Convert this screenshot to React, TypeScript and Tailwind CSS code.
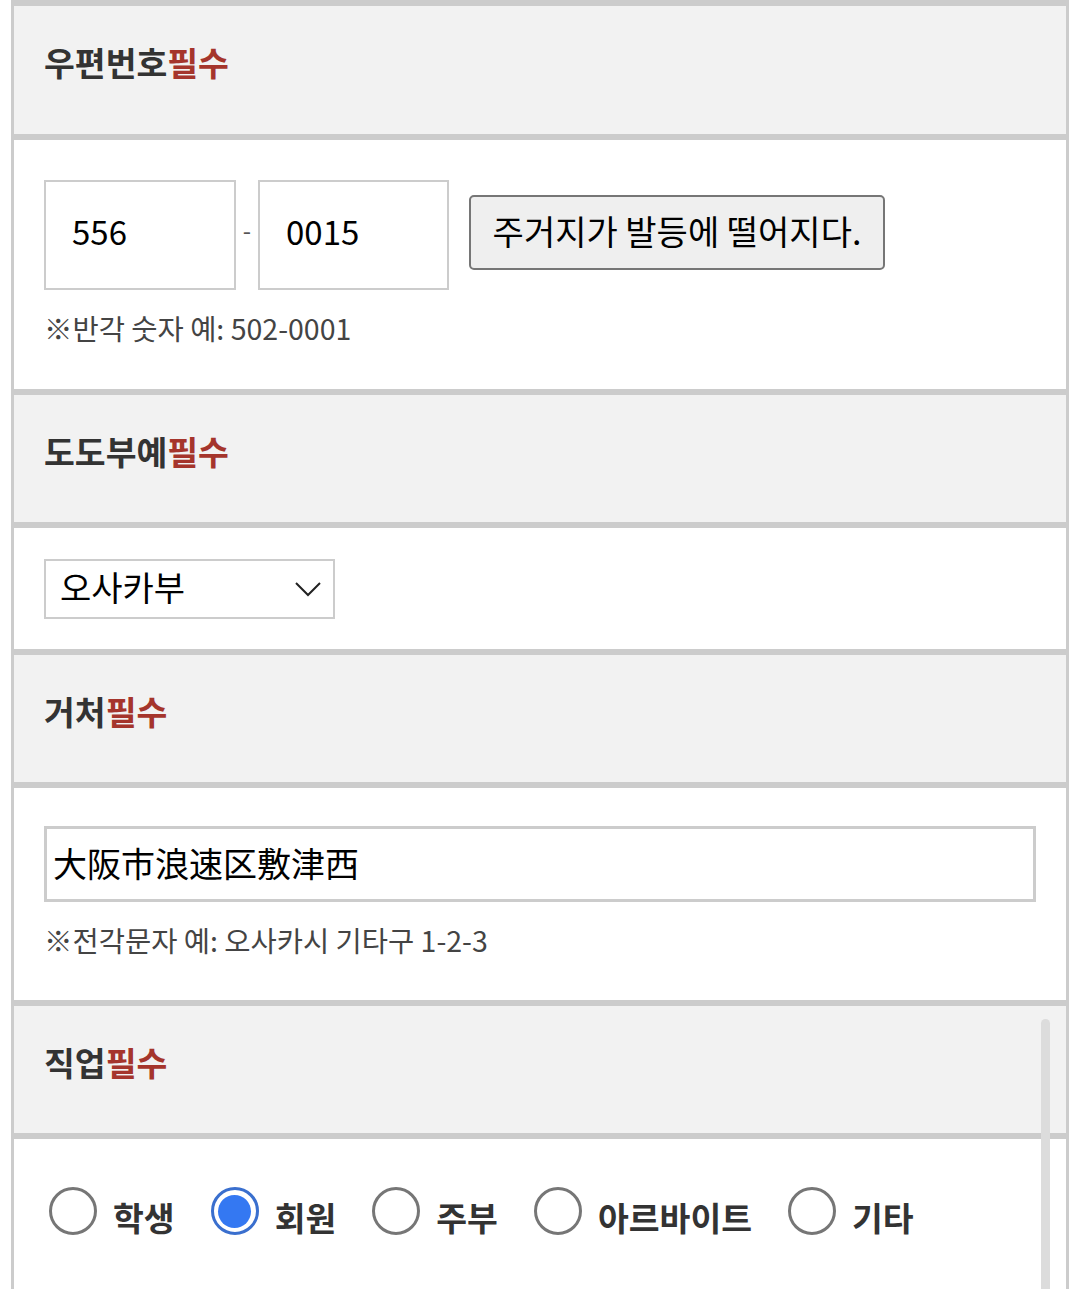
import React from "react";

const font = { fontFamily: '"Noto Sans CJK KR", "Noto Sans CJK JP", "Noto Sans", sans-serif' };

function Header({ label, h }: { label: string; h: string }) {
  return (
    <div className={`flex items-center bg-[#f2f2f2] border-b-[6px] border-[#cccccc] px-[30px] pb-[16px] ${h}`}>
      <span className="text-[33.5px] font-bold text-[#333333] leading-none">
        {label}
        <span className="text-[#a5352c]">필수</span>
      </span>
    </div>
  );
}

function Radio({ label, checked }: { label: string; checked?: boolean }) {
  return (
    <div className="flex items-center gap-[16px]">
      {checked ? (
        <div className="w-[48px] h-[48px] rounded-full border-[3px] border-[#3a6fce] bg-white flex items-center justify-center">
          <div className="w-[33px] h-[33px] rounded-full bg-[#3478f2]" />
        </div>
      ) : (
        <div className="w-[48px] h-[48px] rounded-full border-[3px] border-[#767676] bg-white" />
      )}
      <span className="text-[33.5px] font-bold text-[#333333] leading-none pt-[12px]">{label}</span>
    </div>
  );
}

export default function App() {
  return (
    <div className="relative w-[1080px] h-[1289px] overflow-hidden bg-white px-[11px]" style={font}>
      <div className="border-x-[3px] border-t-[6px] border-[#cccccc] min-h-[1300px]">
        <Header label="우편번호" h="h-[134px]" />
        <div className="h-[255px] border-b-[6px] border-[#cccccc] px-[30px] pt-[40px]">
          <div className="flex items-start">
            <div className="w-[192px] h-[110px] border-[2px] border-[#cccccc] flex items-center pl-[26px] pb-[6px] text-[33px] text-black">
              556
            </div>
            <div className="w-[22px] h-[110px] flex items-center justify-center pb-[10px] text-[24px] text-[#555]">-</div>
            <div className="w-[191px] h-[110px] border-[2px] border-[#cccccc] flex items-center pl-[26px] pb-[6px] text-[33px] text-black">
              0015
            </div>
            <div className="ml-[20px] mt-[15px] w-[416px] h-[75px] border-[2px] border-[#767676] rounded-[5px] bg-[#efefef] flex items-center justify-center pb-[4px] text-[34px] text-black">
              주거지가 발등에 떨어지다.
            </div>
          </div>
          <div className="mt-[24px] text-[28.5px] text-[#444444] leading-none">※반각 숫자 예: 502-0001</div>
        </div>
        <Header label="도도부예" h="h-[133px]" />
        <div className="h-[127px] border-b-[6px] border-[#cccccc] px-[30px] pt-[31px]">
          <div className="w-[291px] h-[60px] border-[2px] border-[#cccccc] flex items-center justify-between pl-[14px] pr-[12px]">
            <span className="text-[34px] text-black leading-none pb-[4px]">오사카부</span>
            <svg width="26" height="16" viewBox="0 0 26 16" fill="none">
              <path d="M1 2 L13 14 L25 2" stroke="#222" strokeWidth="2" />
            </svg>
          </div>
        </div>
        <Header label="거처" h="h-[133px]" />
        <div className="h-[218px] border-b-[6px] border-[#cccccc] px-[30px] pt-[38px]">
          <div className="h-[76px] border-[3px] border-[#cccccc] flex items-center pl-[6px] pb-[4px] text-[34px] text-black" style={{ fontFamily: '"Noto Sans CJK JP", "Noto Sans CJK KR", sans-serif' }}>
            大阪市浪速区敷津西
          </div>
          <div className="mt-[24px] text-[28.5px] text-[#444444] leading-none">※전각문자 예: 오사카시 기타구 1-2-3</div>
        </div>
        <Header label="직업" h="h-[133px]" />
        <div className="px-[35px] pt-[48px] flex items-center gap-[36px]">
          <Radio label="학생" />
          <Radio label="회원" checked />
          <Radio label="주부" />
          <Radio label="아르바이트" />
          <Radio label="기타" />
        </div>
      </div>
      <div className="absolute left-[1041px] top-[1019px] w-[9px] h-[300px] rounded-full bg-[#dcdcdc]" />
    </div>
  );
}
